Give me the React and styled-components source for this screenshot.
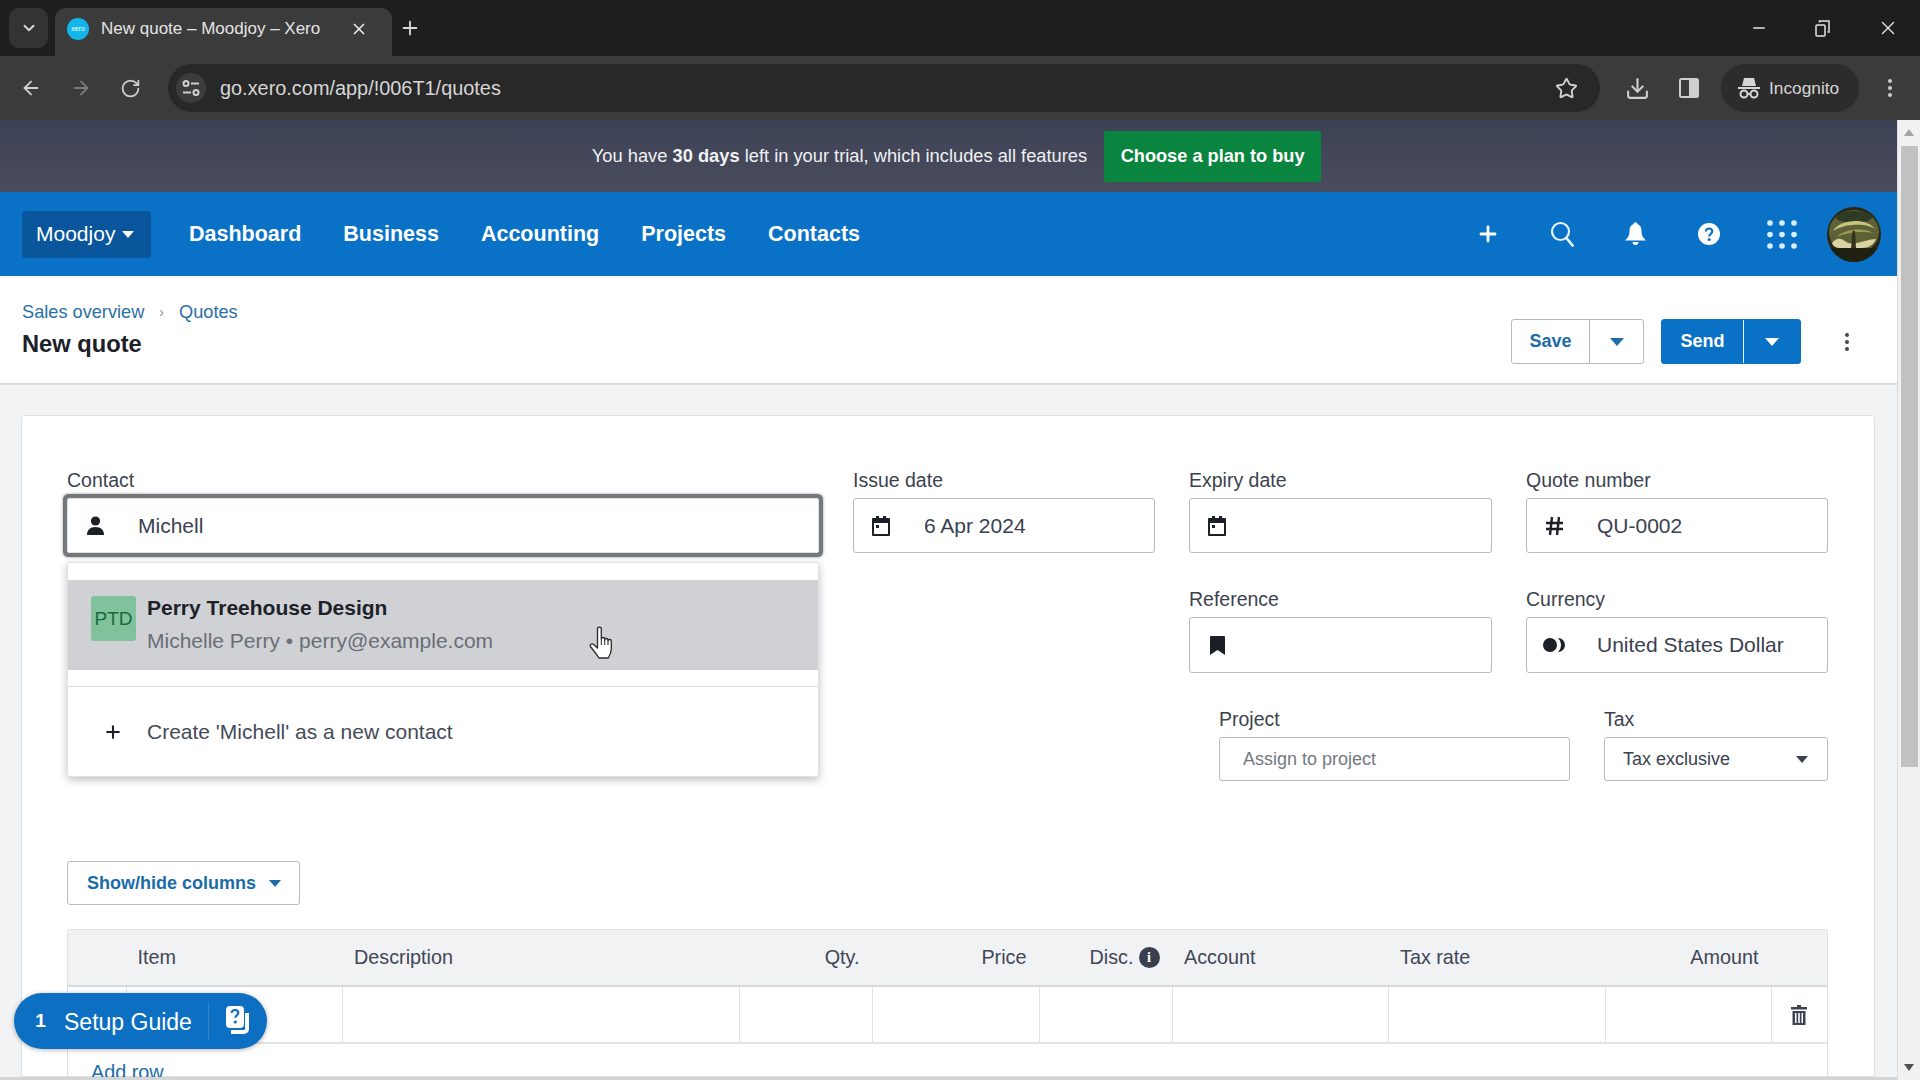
import React from "react";
import styled, { createGlobalStyle } from "styled-components";
import { ArrowLeft, ArrowRight, RotateCw, Star, Download, X, Minus, Plus, ChevronDown } from "lucide-react";

const Global = createGlobalStyle`
  html, body { margin: 0; padding: 0; height: 100%; overflow: hidden; }
  body { font-family: "Liberation Sans", Arial, sans-serif; color: #1f2430; }
  * { box-sizing: border-box; }
  #root { height: 100%; }
`;

const Shell = styled.div`display:flex;flex-direction:column;height:1080px;width:1920px;`;

const TabStrip = styled.div`height:56px;background:#1e1e1e;display:flex;align-items:flex-end;padding-left:9px;`;
const TabSearch = styled.div`width:39px;height:40px;margin-bottom:8px;border-radius:10px;background:#333;color:#d8d8d8;display:flex;align-items:center;justify-content:center;`;
const Tab = styled.div`width:337px;height:48px;margin-left:7px;background:#3b3b3b;border-radius:11px 11px 0 0;display:flex;align-items:center;padding:0 0 7px 12px;color:#e4e4e4;font-size:17px;`;
const Favicon = styled.span`width:22px;height:22px;border-radius:50%;background:#13b5ea;color:#fff;font-size:7px;display:flex;align-items:center;justify-content:center;margin-right:12px;flex:none;`;
const TabTitle = styled.span`flex:1;white-space:nowrap;`;
const TabClose = styled.span`display:flex;margin-right:24px;color:#e6e6e6;`;
const NewTab = styled.span`display:flex;margin:0 0 8px 7px;height:40px;align-items:center;color:#d8d8d8;`;
const WindowControls = styled.div`margin-left:auto;height:56px;display:flex;align-items:center;color:#e2e2e2;padding-right:21px;gap:47px;`;
const RestoreIcon = styled.span`display:flex;`;

const AddressRow = styled.div`height:64px;background:#3b3b3b;display:flex;align-items:center;padding-left:20px;color:#c7c7c7;`;
const NavIcon = styled.span`display:flex;width:${p => p.$w || 50}px;color:${p => p.$dim ? "#7c7c7c" : "#d0d0d0"};`;
const Pill = styled.div`height:48px;width:1432px;border-radius:24px;background:#282828;display:flex;align-items:center;padding-left:8px;padding-right:22px;`;
const SiteIcon = styled.span`width:30px;height:30px;border-radius:50%;background:#3c3c3c;display:flex;align-items:center;justify-content:center;margin-right:14px;`;
const Url = styled.span`font-size:19.9px;color:#d6d6d6;flex:1;`;
const ToolIcon = styled.span`display:flex;color:#cfcfcf;margin-left:${p => p.$ml || 0}px;`;
const IncognitoPill = styled.div`width:138px;height:48px;border-radius:24px;background:#2c2c2c;margin-left:22px;display:flex;align-items:center;padding-left:17px;gap:9px;color:#d6d6d6;font-size:17.3px;`;

const Below = styled.div`flex:1;display:flex;min-height:0;`;
const Page = styled.div`flex:1;min-width:0;display:flex;flex-direction:column;background:#f2f3f5;overflow:hidden;position:relative;`;
const Scrollbar = styled.div`width:23px;background:#f1f1f1;border-left:1px solid #dcdcdc;display:flex;flex-direction:column;align-items:center;`;
const ScrollUp = styled.span`margin-top:9px;width:0;height:0;border:5px solid transparent;border-top:0;border-bottom:7px solid #a3a3a3;`;
const Thumb = styled.div`width:17px;height:621px;background:#c1c1c1;margin-top:10px;`;
const ScrollDown = styled.span`margin-top:auto;margin-bottom:9px;width:0;height:0;border:5px solid transparent;border-bottom:0;border-top:7px solid #505050;`;

const Banner = styled.div`height:72px;flex:none;background:linear-gradient(#3e4256,#484c5c);display:flex;align-items:center;justify-content:center;gap:17px;color:#f0f1f3;font-size:18.3px;padding-left:16px;`;
const Buy = styled.div`width:217px;height:51px;background:#0a853f;color:#fff;font-weight:700;font-size:18.2px;display:flex;align-items:center;justify-content:center;border-radius:2px;`;

const TopNav = styled.div`height:84px;flex:none;background:#0a72c6;display:flex;align-items:center;padding-left:22px;color:#fff;`;
const OrgButton = styled.div`width:129px;height:47px;background:#09569c;border-radius:3px;font-size:21px;display:flex;align-items:center;padding-left:14px;gap:7px;margin-right:38px;`;
const Caret = styled.span`width:0;height:0;border-left:${p => p.$s || 6}px solid transparent;border-right:${p => p.$s || 6}px solid transparent;border-top:${p => (p.$s || 6) + 1}px solid ${p => p.$c || "currentColor"};flex:none;margin-right:${p => p.$mr || 0}px;`;
const NavLink = styled.span`font-weight:700;font-size:21.5px;margin-right:${p => p.$mr}px;`;
const NavTools = styled.div`margin-left:auto;display:flex;align-items:center;padding-right:16px;`;
const NavTool = styled.span`display:flex;width:${p => p.$w || 73.5}px;justify-content:center;`;
const Avatar = styled.span`width:54px;height:55px;border-radius:50%;background:#2a2614;margin-left:8px;display:flex;overflow:hidden;`;

const PageHead = styled.div`height:109px;flex:none;background:#fff;border-bottom:2px solid #d9dbde;display:flex;align-items:flex-start;justify-content:space-between;padding:26px 22px 0;`;
const Crumbs = styled.div`display:flex;align-items:center;font-size:18.2px;color:#2b70a6;height:20px;gap:15px;`;
const CrumbSep = styled.span`color:#8a9099;font-size:14px;`;
const Title = styled.div`font-weight:700;font-size:23.7px;margin-top:9px;color:#1c2029;`;
const Actions = styled.div`display:flex;align-items:center;margin-top:17px;padding-right:25px;`;
const SplitButton = styled.div`display:flex;height:45px;border-radius:3px;margin-right:${p => p.$mr}px;border:1px solid ${p => p.$primary ? "#0a72c6" : "#b5b9bf"};background:${p => p.$primary ? "#0a72c6" : "#fff"};color:${p => p.$primary ? "#fff" : "#1b6ca8"};font-weight:700;font-size:18px;`;
const SplitMain = styled.span`width:${p => p.$w}px;display:flex;align-items:center;justify-content:center;border-right:1px solid ${p => p.$primary ? "#e8f1f9" : "#b5b9bf"};`;
const SplitCaret = styled.span`width:${p => p.$w}px;display:flex;align-items:center;justify-content:center;`;
const Kebab = styled.span`display:flex;color:#3f4656;`;

const Content = styled.div`flex:1;min-height:0;padding:30px 22px 0 21px;overflow:hidden;`;
const Card = styled.div`background:#fff;border:1px solid #dfe1e4;border-radius:3px 3px 0 0;padding:54px 45px 0;height:100%;`;
const FormGrid = styled.div`display:grid;grid-template-columns:752px 302px 303px 302px;column-gap:34px;row-gap:36px;grid-template-rows:83px 84px auto;`;
const Field = styled.div`display:flex;flex-direction:column;grid-column:${p => p.$col || "auto"};position:relative;`;
const Label = styled.label`font-size:19.5px;line-height:20px;color:#3c424f;margin-bottom:8px;`;
const InputBox = styled.div`height:${p => p.$h || 55}px;border:1px solid #b7babf;border-radius:3px;background:#fff;display:flex;align-items:center;font-size:21px;color:#3a4150;`;
const FocusBox = styled(InputBox)`border-color:#dfe0e2;border-radius:2px;box-shadow:0 0 0 4px #74777c,0 0 2px 5px rgba(60,60,60,.25);`;
const IconSlot = styled.span`width:70px;padding-right:16px;display:flex;justify-content:center;color:#1c1f26;flex:none;`;
const Placeholder = styled.span`color:#737983;font-size:18px;padding-left:23px;`;
const TaxValue = styled.span`font-size:18px;padding-left:18px;flex:1;color:#3a4150;`;
const ProjectRow = styled.div`grid-column:2 / 5;display:flex;justify-content:flex-end;gap:34px;`;
const ProjectField = styled(Field)`width:${p => p.$w}px;`;

const Dropdown = styled.div`position:absolute;left:0;top:92px;width:752px;height:215px;background:#fff;border:1px solid #e0e2e5;border-radius:0 0 3px 3px;box-shadow:0 3px 8px rgba(0,0,0,.25);padding-top:17px;z-index:3;`;
const Option = styled.div`height:90px;background:#cfd1d5;display:flex;padding:16px 0 0 23px;position:relative;`;
const Initials = styled.span`width:45px;height:45px;border-radius:3px;background:#7fc29c;color:#166b3b;font-size:19px;display:flex;align-items:center;justify-content:center;margin-right:11px;flex:none;`;
const OptionText = styled.div`display:flex;flex-direction:column;gap:10px;`;
const OptionTitle = styled.span`font-weight:700;font-size:21px;line-height:24px;color:#1d2129;`;
const OptionSub = styled.span`font-size:21px;line-height:22px;color:#6a6e75;`;
const Hand = styled.span`position:absolute;left:521px;top:46px;display:flex;`;
const CreateRow = styled.div`margin-top:16px;border-top:1px solid #dcdee1;height:90px;display:flex;align-items:center;font-size:21px;color:#454b57;padding-left:35px;gap:24px;`;

const ColumnsButton = styled.div`margin-top:80px;width:233px;height:44px;border:1px solid #b7babf;border-radius:3px;color:#1b6ca8;font-weight:700;font-size:18px;display:flex;align-items:center;padding-left:19px;gap:13px;`;

const cols = "57.5px 216.5px 396.5px 133.5px 167px 133px 216px 217px 166px 56px";
const Table = styled.div`margin-top:24px;width:1761px;border:1px solid #dfe1e4;border-bottom:0;border-radius:3px 3px 0 0;`;
const HeadRow = styled.div`display:grid;grid-template-columns:${cols};height:57px;background:#f1f2f4;border-bottom:2px solid #d8dade;`;
const HeadCell = styled.div`display:flex;align-items:center;justify-content:${p => p.$right ? "flex-end" : "flex-start"};padding:0 12.5px 0 12px;gap:5px;font-size:19.8px;color:#414756;white-space:nowrap;`;
const BodyRow = styled.div`display:grid;grid-template-columns:${cols};height:57px;border-bottom:2px solid #e1e3e6;`;
const BodyCell = styled.div`border-left:${p => p.$first ? 0 : "1px solid #dfe1e4"};display:flex;align-items:center;justify-content:center;color:#3e4453;padding-right:${p => p.$pr || 0}px;`;
const AddRow = styled.div`color:#1b6ca8;font-size:19.8px;padding:17px 0 0 23px;`;
const InfoDot = styled.span`width:21px;height:21px;border-radius:50%;background:#3a3f4f;color:#fff;font-size:14px;font-weight:700;font-family:"Liberation Serif",serif;display:flex;align-items:center;justify-content:center;flex:none;`;

const Guide = styled.div`position:absolute;left:14px;bottom:31px;width:253px;height:56px;border-radius:28px;background:#0d6fc1;color:#fff;display:flex;align-items:center;box-shadow:0 1px 5px rgba(0,0,0,.3);font-size:23px;z-index:5;`;
const GuideCount = styled.span`font-weight:700;font-size:19px;width:47px;text-align:center;margin-left:3px;`;
const GuideLabel = styled.span`width:144px;white-space:nowrap;padding-top:2px;`;
const GuideIcon = styled.span`border-left:1px solid #2f83c9;height:38px;display:flex;align-items:center;justify-content:center;flex:1;`;
const HScroll = styled.div`height:3px;flex:none;background:#d3d4d6;`;

const Calendar = () => (
  <svg width="18" height="20" viewBox="0 0 18 20" fill="#1c1f26"><path d="M4 0h3v2h4V0h3v2h3a1 1 0 0 1 1 1v16a1 1 0 0 1-1 1H1a1 1 0 0 1-1-1V3a1 1 0 0 1 1-1h3zM2 7v11h14V7z"/><rect x="4" y="9" width="3" height="3"/></svg>
);
const Person = () => (
  <svg width="19" height="20" viewBox="0 0 19 20" fill="#1c1f26"><circle cx="9.5" cy="5" r="4.6"/><path d="M1 19c0-5 3-8 8.5-8s8.500 3 8.500 8z"/></svg>
);
const Bookmark = () => (
  <svg width="15" height="19" viewBox="0 0 15 19" fill="#1c1f26"><path d="M1 0h13a1 1 0 0 1 1 1v18l-7.500-5L0 19V1a1 1 0 0 1 1-1z"/></svg>
);
const Currency = () => (
  <svg width="22" height="14" viewBox="0 0 22 14" fill="#1c1f26"><circle cx="7" cy="7" r="7"/><path d="M15 0a7 7 0 0 1 0 14 9.500 9.500 0 0 0 0-14z"/></svg>
);
const Hash = () => (
  <svg width="19" height="20" viewBox="0 0 19 20" fill="none" stroke="#1c1f26" strokeWidth="2.400"><path d="M7 1 5 19M14 1l-2 18M1 7h17M1 13h17"/></svg>
);
const NavSearch = () => (
  <svg width="24" height="26" viewBox="0 0 24 26" fill="none" stroke="#e8f4fc" strokeWidth="2.200"><circle cx="10.500" cy="10.500" r="8.500"/><path d="m16.500 17 6 7.500" strokeWidth="2.800" strokeLinecap="round"/></svg>
);
const Bell = () => (
  <svg width="21" height="24" viewBox="0 0 21 24" fill="#fff"><circle cx="10.500" cy="2.200" r="2"/><path d="M10.500 2c4.500 0 6 3 6 7.500 0 4 1.500 6 4.500 9H0c3-3 4.500-5 4.500-9C4.500 5 6 2 10.500 2z"/><path d="M7.500 20h6a3 3 0 0 1-6 0z"/></svg>
);
const Help = () => (
  <svg width="22" height="22" viewBox="0 0 22 22"><circle cx="11" cy="11" r="11" fill="#fff"/><path d="M7.800 8.500C8 6.500 9.300 5.500 11.100 5.500c1.900 0 3.200 1.200 3.200 2.800 0 2.600-3.100 2.500-3.100 5.200" fill="none" stroke="#0a72c6" strokeWidth="2.200"/><circle cx="11.200" cy="16.500" r="1.500" fill="#0a72c6"/></svg>
);
const Grid9 = () => (
  <svg width="30" height="29" viewBox="0 0 30 29" fill="#d9f0fd">
    {[3, 15, 27].flatMap(x => [3, 14.500, 26].map(y => <circle key={`${x}-${y}`} cx={x} cy={y} r="2.800" />))}
  </svg>
);
const Trash = () => (
  <svg width="16" height="20" viewBox="0 0 16 20" fill="#3e4453"><path d="M6 0h4v2h6v2.500H0V2h6z"/><path d="M1.500 6h13v14h-13zM4 8v10h1.500V8zm3.200 0v10h1.600V8zm3.300 0v10H12V8z" fillRule="evenodd"/></svg>
);
const SiteSettings = () => (
  <svg width="18" height="18" viewBox="0 0 18 18" fill="none" stroke="#d0d0d0" strokeWidth="2"><circle cx="4" cy="4.500" r="2.500"/><path d="M9 4.500h8M1 13.500h8"/><circle cx="14" cy="13.500" r="2.500"/></svg>
);
const SidePanel = () => (
  <svg width="20" height="20" viewBox="0 0 20 20"><rect x="1" y="1" width="18" height="18" rx="1.500" fill="none" stroke="#cfcfcf" strokeWidth="2"/><rect x="10" y="1" width="9" height="18" fill="#cfcfcf"/></svg>
);
const Incognito = () => (
  <svg width="22" height="22" viewBox="0 0 22 22" fill="#d6d6d6"><path d="M6 1h10l2 8H4z"/><rect x="0" y="10" width="22" height="2"/><circle cx="6" cy="17" r="3.500" fill="none" stroke="#d6d6d6" strokeWidth="2"/><circle cx="16" cy="17" r="3.500" fill="none" stroke="#d6d6d6" strokeWidth="2"/><path d="M9.500 16h3v2h-3z"/></svg>
);
const Restore = () => (
  <svg width="15" height="17" viewBox="0 0 15 17" fill="none" stroke="#e2e2e2" strokeWidth="1.500"><rect x="1" y="5" width="9" height="11" rx="1"/><path d="M4.500 2.500V1H14v11h-1.500"/></svg>
);
const Kebabs = ({ color = "#3f4656", gap = 7, r = 2 }) => (
  <svg width="6" height={r * 2 + gap * 2 + 2} viewBox={`0 0 6 ${r * 2 + gap * 2 + 2}`} fill={color}>
    <circle cx="3" cy={r + 1} r={r} /><circle cx="3" cy={r + gap + 1} r={r} /><circle cx="3" cy={r + gap * 2 + 1} r={r} />
  </svg>
);
const GuideGlyph = () => (
  <svg width="30" height="32" viewBox="0 0 30 32" fill="none"><path d="M24 8v16a3 3 0 0 1-3 3H8" stroke="#fff" strokeWidth="4"/><rect x="3" y="1" width="18" height="22" rx="4" fill="#fff"/><path d="M8.500 8c.3-2 1.500-3 3.500-3s3.300 1.200 3.300 2.800c0 2.400-3 2.600-3 5" stroke="#0d6fc1" strokeWidth="2.200"/><circle cx="12.300" cy="17" r="1.600" fill="#0d6fc1"/></svg>
);
const TreePhoto = () => (
  <svg width="54" height="55" viewBox="0 0 54 55">
    <ellipse cx="27" cy="25" rx="25" ry="22" fill="#5c6236"/>
    <ellipse cx="27" cy="10" rx="18" ry="6" fill="#2e3a24"/>
    <path d="M6 24C12 12 40 10 48 22c-8-6-30-6-42 2z" fill="#c8c27c"/>
    <path d="M10 30c6-8 28-10 36-4-10-2-26-1-36 4z" fill="#9d9a56"/>
    <path d="M5 36c6-6 8-5 16 0 10 2 18-4 28-4-2 6-8 9-14 9H14C10 41 6 40 5 36z" fill="#d9d2a2"/>
    <path d="M25.500 24h2.500l1 18h-5z" fill="#33301c"/>
    <rect y="41" width="54" height="14" fill="#1f2012"/>
  </svg>
);
const HandCursor = () => (
  <svg width="26" height="34" viewBox="0 0 26 34" fill="#fff" stroke="#2a2a2a" strokeWidth="1.300" strokeLinejoin="round">
    <path d="M8.500 3c0-2.400 3.800-2.400 3.800 0v10c0-2 3.400-2 3.400 0v1c0-2 3.300-2 3.300 0v1c0-2 3.300-2 3.300 0v8c0 4-1.500 6.500-3 9H10C8 29 5 25 1.800 21c-1.600-2.200.8-4 3-2.500l3.700 3.500z"/>
    <path d="M12.300 13v6M15.700 14v5M19 15v4" fill="none" strokeWidth="1"/>
  </svg>
);

export default function App() {
  return (
    <Shell>
      <Global />
      <TabStrip>
        <TabSearch><ChevronDown size={18} strokeWidth={2.500} /></TabSearch>
        <Tab>
          <Favicon>xero</Favicon>
          <TabTitle>New quote – Moodjoy – Xero</TabTitle>
          <TabClose><X size={18} strokeWidth={2.200} /></TabClose>
        </Tab>
        <NewTab><Plus size={22} strokeWidth={2} /></NewTab>
        <WindowControls>
          <Minus size={18} strokeWidth={2} />
          <RestoreIcon><Restore /></RestoreIcon>
          <X size={22} strokeWidth={1.500} />
        </WindowControls>
      </TabStrip>
      <AddressRow>
        <NavIcon><ArrowLeft size={22} /></NavIcon>
        <NavIcon $dim><ArrowRight size={22} /></NavIcon>
        <NavIcon $w={48}><RotateCw size={21} /></NavIcon>
        <Pill>
          <SiteIcon><SiteSettings /></SiteIcon>
          <Url>go.xero.com/app/!006T1/quotes</Url>
          <ToolIcon><Star size={23} strokeWidth={2} /></ToolIcon>
        </Pill>
        <ToolIcon $ml={25}><Download size={25} strokeWidth={2} /></ToolIcon>
        <ToolIcon $ml={29}><SidePanel /></ToolIcon>
        <IncognitoPill><Incognito />Incognito</IncognitoPill>
        <ToolIcon $ml={28}><Kebabs color="#cfcfcf" gap={7} r={2} /></ToolIcon>
      </AddressRow>
      <Below>
        <Page>
          <Banner>
            <span>You have <b>30 days</b> left in your trial, which includes all features</span>
            <Buy>Choose a plan to buy</Buy>
          </Banner>
          <TopNav>
            <OrgButton>Moodjoy <Caret /></OrgButton>
            <NavLink $mr={42}>Dashboard</NavLink>
            <NavLink $mr={42}>Business</NavLink>
            <NavLink $mr={42}>Accounting</NavLink>
            <NavLink $mr={42}>Projects</NavLink>
            <NavLink $mr={0}>Contacts</NavLink>
            <NavTools>
              <NavTool><Plus size={24} strokeWidth={2.800} /></NavTool>
              <NavTool><NavSearch /></NavTool>
              <NavTool><Bell /></NavTool>
              <NavTool><Help /></NavTool>
              <NavTool><Grid9 /></NavTool>
              <Avatar><TreePhoto /></Avatar>
            </NavTools>
          </TopNav>
          <PageHead>
            <div>
              <Crumbs>Sales overview <CrumbSep>›</CrumbSep> Quotes</Crumbs>
              <Title>New quote</Title>
            </div>
            <Actions>
              <SplitButton $mr={17}>
                <SplitMain $w={78}>Save</SplitMain>
                <SplitCaret $w={53}><Caret $s={7} /></SplitCaret>
              </SplitButton>
              <SplitButton $primary $mr={43}>
                <SplitMain $primary $w={82}>Send</SplitMain>
                <SplitCaret $w={56}><Caret $s={7} /></SplitCaret>
              </SplitButton>
              <Kebab><Kebabs /></Kebab>
            </Actions>
          </PageHead>
          <Content>
            <Card>
              <FormGrid>
                <Field>
                  <Label>Contact</Label>
                  <FocusBox>
                    <IconSlot><Person /></IconSlot>
                    Michell
                  </FocusBox>
                  <Dropdown>
                    <Option>
                      <Initials>PTD</Initials>
                      <OptionText>
                        <OptionTitle>Perry Treehouse Design</OptionTitle>
                        <OptionSub>Michelle Perry • perry@example.com</OptionSub>
                      </OptionText>
                      <Hand><HandCursor /></Hand>
                    </Option>
                    <CreateRow><Plus size={20} strokeWidth={2.500} color="#1c1f26" />Create 'Michell' as a new contact</CreateRow>
                  </Dropdown>
                </Field>
                <Field>
                  <Label>Issue date</Label>
                  <InputBox><IconSlot><Calendar /></IconSlot>6 Apr 2024</InputBox>
                </Field>
                <Field>
                  <Label>Expiry date</Label>
                  <InputBox><IconSlot><Calendar /></IconSlot></InputBox>
                </Field>
                <Field>
                  <Label>Quote number</Label>
                  <InputBox><IconSlot><Hash /></IconSlot>QU-0002</InputBox>
                </Field>
                <Field $col="3">
                  <Label>Reference</Label>
                  <InputBox $h={56}><IconSlot><Bookmark /></IconSlot></InputBox>
                </Field>
                <Field>
                  <Label>Currency</Label>
                  <InputBox $h={56}><IconSlot><Currency /></IconSlot>United States Dollar</InputBox>
                </Field>
                <ProjectRow>
                  <ProjectField $w={351}>
                    <Label>Project</Label>
                    <InputBox $h={44}><Placeholder>Assign to project</Placeholder></InputBox>
                  </ProjectField>
                  <ProjectField $w={224}>
                    <Label>Tax</Label>
                    <InputBox $h={44}><TaxValue>Tax exclusive</TaxValue><Caret $s={6} $c="#3a4150" $mr={19} /></InputBox>
                  </ProjectField>
                </ProjectRow>
              </FormGrid>
              <ColumnsButton>Show/hide columns <Caret /></ColumnsButton>
              <Table>
                <HeadRow>
                  <HeadCell />
                  <HeadCell>Item</HeadCell>
                  <HeadCell>Description</HeadCell>
                  <HeadCell $right>Qty.</HeadCell>
                  <HeadCell $right>Price</HeadCell>
                  <HeadCell $right>Disc.<InfoDot>i</InfoDot></HeadCell>
                  <HeadCell>Account</HeadCell>
                  <HeadCell>Tax rate</HeadCell>
                  <HeadCell $right>Amount</HeadCell>
                  <HeadCell />
                </HeadRow>
                <BodyRow>
                  <BodyCell $first />
                  <BodyCell />
                  <BodyCell />
                  <BodyCell />
                  <BodyCell />
                  <BodyCell />
                  <BodyCell />
                  <BodyCell />
                  <BodyCell />
                  <BodyCell $pr={2}><Trash /></BodyCell>
                </BodyRow>
                <AddRow>Add row</AddRow>
              </Table>
            </Card>
          </Content>
          <HScroll />
          <Guide>
            <GuideCount>1</GuideCount>
            <GuideLabel>Setup Guide</GuideLabel>
            <GuideIcon><GuideGlyph /></GuideIcon>
          </Guide>
        </Page>
        <Scrollbar>
          <ScrollUp />
          <Thumb />
          <ScrollDown />
        </Scrollbar>
      </Below>
    </Shell>
  );
}
